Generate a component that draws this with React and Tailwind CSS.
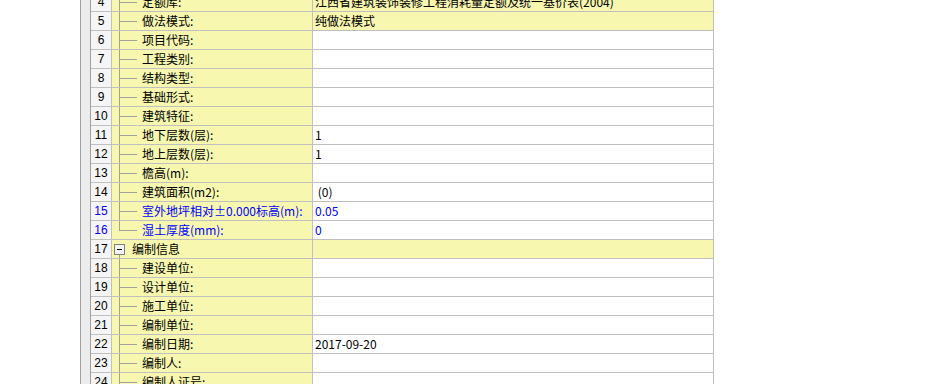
import React from 'react';

const rows = [
  { n: 4, label: '定额库:', value: '江西省建筑装饰装修工程消耗量定额及统一基价表(2004)', yellow: true, tree: 'mid' },
  { n: 5, label: '做法模式:', value: '纯做法模式', yellow: true, tree: 'mid' },
  { n: 6, label: '项目代码:', tree: 'mid' },
  { n: 7, label: '工程类别:', tree: 'mid' },
  { n: 8, label: '结构类型:', tree: 'mid' },
  { n: 9, label: '基础形式:', tree: 'mid' },
  { n: 10, label: '建筑特征:', tree: 'mid' },
  { n: 11, label: '地下层数(层):', value: '1', tree: 'mid' },
  { n: 12, label: '地上层数(层):', value: '1', tree: 'mid' },
  { n: 13, label: '檐高(m):', tree: 'mid' },
  { n: 14, label: '建筑面积(m2):', value: ' (0)', tree: 'mid' },
  { n: 15, label: '室外地坪相对±0.000标高(m):', value: '0.05', blue: true, tree: 'mid' },
  { n: 16, label: '湿土厚度(mm):', value: '0', blue: true, tree: 'last' },
  { n: 17, label: '编制信息', yellow: true, tree: 'group' },
  { n: 18, label: '建设单位:', tree: 'mid' },
  { n: 19, label: '设计单位:', tree: 'mid' },
  { n: 20, label: '施工单位:', tree: 'mid' },
  { n: 21, label: '编制单位:', tree: 'mid' },
  { n: 22, label: '编制日期:', value: '2017-09-20', tree: 'mid' },
  { n: 23, label: '编制人:', tree: 'mid' },
  { n: 24, label: '编制人证号:', tree: 'mid' },
];

function TreeGutter({ type }) {
  if (type === 'group') {
    return (
      <div className="relative w-[20px] h-full shrink-0">
        <div className="absolute left-[7px] top-[14px] bottom-0 w-px bg-[#a0a0a0]" />
        <div className="absolute left-[2px] top-[4px] w-[11px] h-[11px] border border-[#808080] bg-[#f4f4f4] flex items-center justify-center">
          <div className="w-[5px] h-px bg-black" />
        </div>
      </div>
    );
  }
  return (
    <div className="relative w-[30px] h-full shrink-0">
      <div
        className={
          type === 'last'
            ? 'absolute left-[7px] top-0 h-[10px] w-px bg-[#a0a0a0]'
            : 'absolute left-[7px] top-0 bottom-0 w-px bg-[#a0a0a0]'
        }
      />
      <div className="absolute left-[8px] top-[9px] w-[17px] h-px bg-[#a0a0a0]" />
    </div>
  );
}

function Row({ row }) {
  const color = row.blue ? 'text-[#0000ff]' : 'text-black';
  return (
    <div className="flex h-[19px] border-b border-[#c0c0c0]">
      <div className={`w-[21px] shrink-0 bg-[#f5f5f5] border-r border-[#c0c0c0] flex items-center justify-center font-['Liberation_Sans',sans-serif] text-[12px] ${color}`}>
        {row.n}
      </div>
      <div className={`w-[201px] shrink-0 bg-[#f7f7b0] border-r border-[#c0c0c0] flex items-center ${color}`}>
        <TreeGutter type={row.tree} />
        <span className="whitespace-pre">{row.label}</span>
      </div>
      <div className={`w-[401px] shrink-0 border-r border-[#c0c0c0] flex items-center pl-[2px] whitespace-pre overflow-hidden ${row.yellow ? 'bg-[#f7f7b0]' : 'bg-white'} ${color}`}>
        {row.value}
      </div>
    </div>
  );
}

export default function App() {
  return (
    <div className="w-[938px] h-[384px] overflow-hidden bg-white flex font-['Noto_Sans_CJK_SC',sans-serif] text-[12px] leading-none">
      <div className="w-[80px] shrink-0" />
      <div className="w-px shrink-0 bg-[#a0a0a0]" />
      <div className="w-[9px] shrink-0 bg-[#ececec]" />
      <div className="shrink-0 border-l border-[#a0a0a0] -mt-[7px]">
        {rows.map((r) => (
          <Row key={r.n} row={r} />
        ))}
      </div>
      <div className="flex-1" />
    </div>
  );
}
